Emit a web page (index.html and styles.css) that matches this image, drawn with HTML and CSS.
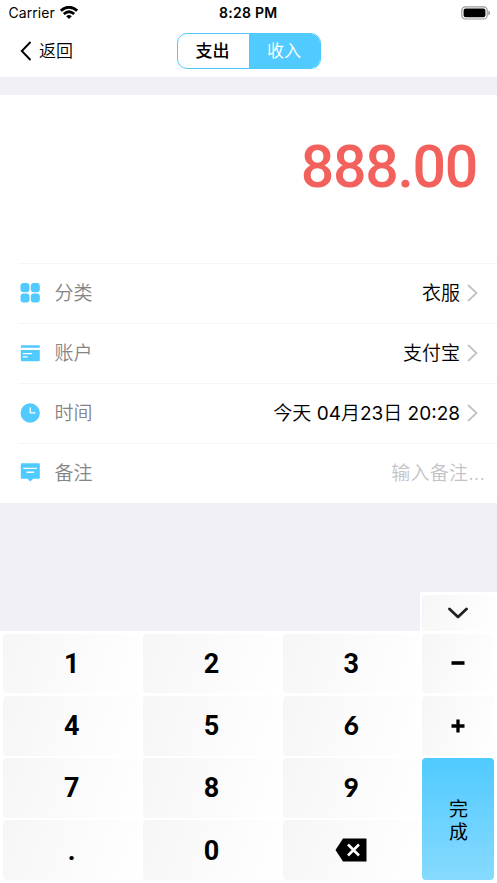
FILE: index.html
```html
<!DOCTYPE html>
<html lang="zh-CN">
<head>
<meta charset="UTF-8">
<title>记账</title>
<link rel="stylesheet" href="styles.css">
</head>
<body>
<div class="app">
  <header class="header">
    <div class="status">
      <div class="carrier">Carrier
        <svg class="wifi" width="18" height="13" viewBox="0 0 18 13"><g fill="none" stroke="#000" stroke-width="2.8"><path d="M.8 4.600Q9-2.200 17.200 4.600"/><path d="M3.800 8Q9 3.600 14.200 8"/></g><path d="M9 13 6.200 10.200Q9 8 11.800 10.200Z"/></svg>
      </div>
      <div class="clock">8:28 PM</div>
      <svg class="battery" width="30" height="14" viewBox="0 0 30 14"><rect x=".8" y=".8" width="25.400" height="12.200" rx="3.600" fill="#fff" stroke="#999" stroke-width="1.200"/><rect x="2.600" y="2.600" width="21.800" height="8.600" rx="2"/><path d="M27.400 4.800q1.600.5 1.600 2.200t-1.600 2.200z" fill="#888"/></svg>
    </div>
    <nav class="nav">
      <div class="back"><svg width="12" height="20" viewBox="0 0 12 20"><path d="M10.500 1 1.800 10l8.700 9" fill="none" stroke="#000" stroke-width="1.900"/></svg><span>返回</span></div>
      <div class="segment"><div class="option">支出</div><div class="option selected">收入</div></div>
    </nav>
  </header>
  <section class="amount">888.00</section>
  <section class="rows">
    <div class="row">
      <svg class="icon" viewBox="0 0 20 20"><rect x=".5" width="9" height="9.200" rx="3"/><rect x="10.800" width="9" height="9.200" rx="3"/><rect x=".5" y="10.400" width="9" height="9.200" rx="3"/><rect x="10.800" y="10.400" width="9" height="9.200" rx="3"/></svg>
      <span class="label">分类</span><span class="value">衣服</span>
      <svg class="arrow" viewBox="0 0 11 18"><path d="m1 1 8.500 8L1 17"/></svg>
    </div>
    <div class="row">
      <svg class="icon" viewBox="0 0 20 20"><path d="M.8 4.700V3.200q0-1 1-1h17q1 0 1 1v1.500zM.8 7h19v10q0 1.200-1.200 1.200H2Q.8 18.200.8 17z"/><path d="M2.800 10.700h9.200M2.800 13.800h4.800" stroke="#fff" stroke-width="1.200"/></svg>
      <span class="label">账户</span><span class="value">支付宝</span>
      <svg class="arrow" viewBox="0 0 11 18"><path d="m1 1 8.500 8L1 17"/></svg>
    </div>
    <div class="row">
      <svg class="icon" viewBox="0 0 20 20"><circle cx="10.200" cy="10" r="9.700"/><path d="M10.200 4.500v5.400h5.300" fill="none" stroke="#fff" stroke-width="1.300"/></svg>
      <span class="label">时间</span><span class="value date">今天 <b>04</b>月<b>23</b>日 <b>20:28</b></span>
      <svg class="arrow" viewBox="0 0 11 18"><path d="m1 1 8.500 8L1 17"/></svg>
    </div>
    <div class="row">
      <svg class="icon" viewBox="0 0 20 20"><path d="M1.800.2h17q1 0 1 1v13.500q0 1-1 1h-5.700L10.300 18.500l-2.800-2.800H1.800q-1 0-1-1V1.200q0-1 1-1z"/><path d="M3.300 5.400h13.500M6.500 9.200h7.600" stroke="#fff" stroke-width="1.400"/></svg>
      <span class="label">备注</span><span class="placeholder">输入备注...</span>
    </div>
  </section>
  <section class="keyboard">
    <div class="toggle"><div class="key"><svg width="20" height="12" viewBox="0 0 20 12"><path d="m1.500 2 8.500 8 8.500-8" fill="none" stroke="#222" stroke-width="2.800" stroke-linecap="round" stroke-linejoin="round"/></svg></div></div>
    <div class="keys">
      <div class="key"><span>1</span></div><div class="key"><span>2</span></div><div class="key"><span>3</span></div><div class="key"><svg width="14" height="14" viewBox="0 0 14 14"><path d="M.5 7h13" stroke="#000" stroke-width="3.600"/></svg></div>
      <div class="key"><span>4</span></div><div class="key"><span>5</span></div><div class="key slant"><span>6</span></div><div class="key"><svg width="14" height="14" viewBox="0 0 14 14"><path d="M.5 7h13M7 .5v13" stroke="#000" stroke-width="3.300"/></svg></div>
      <div class="key"><span>7</span></div><div class="key"><span>8</span></div><div class="key slant"><span>9</span></div><div class="key done">完<br>成</div>
      <div class="key"><span>.</span></div><div class="key"><span>0</span></div><div class="key"><svg width="32" height="24" viewBox="0 0 32 24"><path d="M8 .5H31q.5 0 .5.500v22q0 .500-.500.500H8L.5 12z"/><path d="m13 6.500 11 11m0-11-11 11" stroke="#fff" stroke-width="2.600"/></svg></div>
    </div>
  </section>
</div>
</body>
</html>
```
FILE: styles.css
```css
* { box-sizing: border-box; }
body { margin: 0; font-family: Inter, "Noto Sans CJK SC", sans-serif; color: #000; }
svg { display: block; flex: none; }
.app { width: 497px; height: 883px; background: #f0f0f6; display: flex; flex-direction: column; overflow: hidden; }
.header { height: 77px; background: #fff; flex: none; margin-bottom: 18px; }
.status { height: 25px; padding: 0 6px 0 8.5px; display: grid; grid-template-columns: 1fr auto 1fr; align-items: center; font-size: 14px; line-height: 25px; }
.carrier { display: flex; align-items: center; gap: 5px; letter-spacing: .05px; }
.clock { font-weight: 600; letter-spacing: .3px; margin-right: 3px; }
.battery { justify-self: end; }
.nav { height: 51px; display: grid; grid-template-columns: 1fr 144px 1fr; align-items: center; }
.back { display: flex; align-items: center; gap: 7px; padding-left: 20px; font-size: 17px; font-weight: 350; line-height: 24px; }
.segment { height: 36px; border: 1.5px solid #50caff; border-radius: 10px; overflow: hidden; display: grid; grid-template-columns: 1fr 1fr; }
.option { font-size: 17px; font-weight: 500; line-height: 35px; text-align: center; }
.option:first-child { padding-right: 1px; }
.option.selected { background: #50caff; color: #fff; font-weight: 400; }
.amount { height: 168px; flex: none; background: #fff; color: #f2615c; font: 500 59px/70px Roboto, sans-serif; letter-spacing: -1.3px; text-align: right; padding: 37px 20px 0 0; }
.rows { background: #fff; flex: none; padding-left: 18px; }
.row { height: 60px; border-top: 1px solid #f5f5f5; display: flex; align-items: center; padding: 0 19px 1px 2px; font-size: 19px; line-height: 28px; }
.icon { width: 20px; height: 20px; fill: #50caff; }
.label { margin-left: 14.5px; padding-top: 2px; color: #858585; font-weight: 350; flex: 1; }
.value { margin-right: 7px; padding-top: 2px; font-weight: 350; }
.date b { font-weight: 400; }
.arrow { width: 11px; height: 18px; fill: none; stroke: #c2c2c2; stroke-width: 1.8; }
.placeholder { color: #c3c3c6; font-weight: 350; margin-right: -7px; padding-top: 2px; letter-spacing: .25px; }
.keyboard { margin-top: auto; display: flex; flex-direction: column; }
.toggle { width: 77px; height: 39px; align-self: flex-end; background: #fff; padding: 3px 2.5px 0 2px; display: grid; }
.keys { height: 252px; background: #fff; padding: 2.5px 2.5px 3px 3px; display: grid; grid-template-columns: repeat(3, 1fr) 72px; grid-template-rows: repeat(4, 1fr); gap: 2.5px; }
.key { border-radius: 4px; background: linear-gradient(110deg, #f6f6f6, #fff); display: flex; align-items: center; justify-content: center; font: 700 27px/30px Roboto, sans-serif; }
.key > span { padding-top: 1px; }
.key.slant { font-family: Lato, sans-serif; font-weight: 900; font-size: 26px; }
.key.slant > span { padding: 0 0 1px; }
.key.done { grid-column: 4; grid-row: 3 / 5; background: linear-gradient(#50caff, #87daff); display: grid; align-content: center; justify-items: center; font: 400 19px/23px "Noto Sans CJK SC", sans-serif; }
```
